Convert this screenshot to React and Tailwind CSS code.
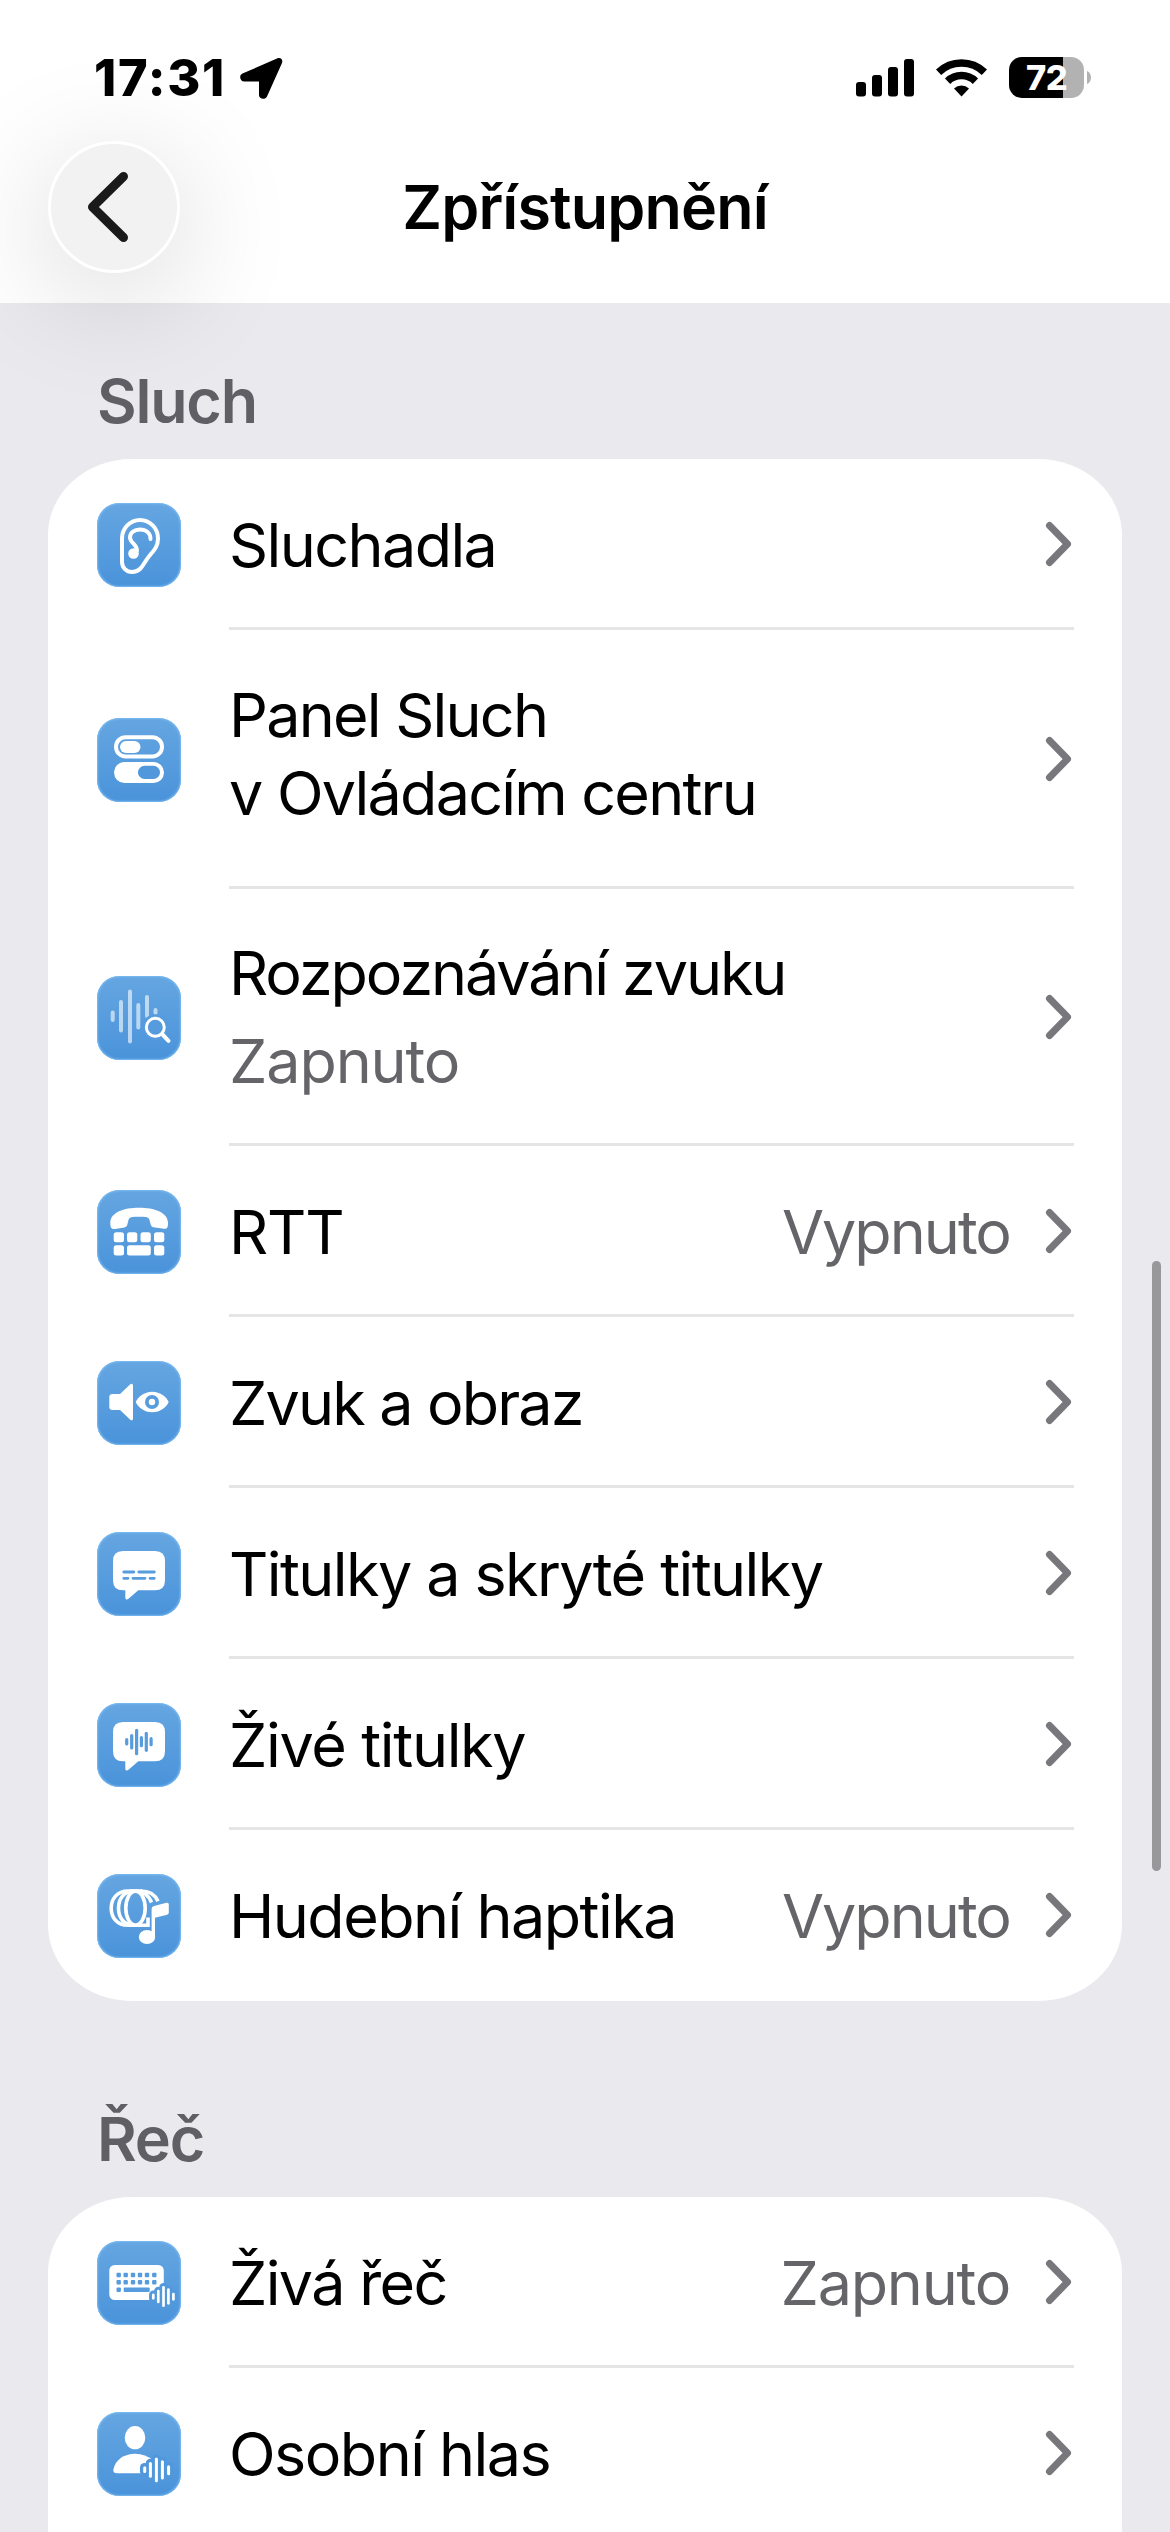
import React from 'react';

const KEY_COLUMNS = [21.7, 28.7, 36, 43, 50, 57.3];

const Bars = ({ bars, color = '#fff', width = 3 }) => (
  <g stroke={color} strokeWidth={width} strokeLinecap="round">
    {bars.map(([x, top, bottom]) => (
      <line key={x} x1={x} x2={x} y1={top} y2={bottom} />
    ))}
  </g>
);

const EarIcon = () => (
  <g fill="none" stroke="#fff" strokeWidth="4" strokeLinecap="round" strokeLinejoin="round">
    <path d="M25 35.500A18 18.500 0 0 1 61 35.500C61 43 57.500 47 53.500 51.500C48.500 57 47 62 43.500 65.500C41 68 38 69 35 69A10 10 0 0 1 25 59Z" />
    <path d="M53.500 36C53.500 30 49 26.500 43 26.500C37 26.500 33 30 33 34.500C33 40 40 41 40 47.500" />
    <circle cx="36.500" cy="50.500" r="5.300" fill="#fff" stroke="none" />
  </g>
);

const TogglesIcon = () => (
  <>
    <rect x="19" y="19.200" width="46" height="19.300" rx="9.600" fill="none" stroke="#fff" strokeWidth="4" />
    <rect x="23" y="23" width="20.500" height="12" rx="6" fill="#fff" />
    <rect x="17" y="44" width="50" height="21" rx="10.500" fill="#fff" />
    <rect x="41" y="47.700" width="22" height="13.300" rx="6.600" fill="#5097db" />
  </>
);

const SoundSearchIcon = () => (
  <>
    <g opacity="0.6">
      <Bars width={4} bars={[[15.7, 36.5, 44], [24, 26, 54.5], [33, 15.5, 65.5], [41.3, 29, 51.5], [50, 21, 40], [58.5, 34, 37]]} />
    </g>
    <circle cx="58.300" cy="51.300" r="13" fill="#559bdd" />
    <g fill="none" stroke="#fff" strokeLinecap="round">
      <circle cx="58.300" cy="51.300" r="9" strokeWidth="3" />
      <path d="M65.500 58.500L71.500 64.800" strokeWidth="4" />
    </g>
  </>
);

const PhoneIcon = () => (
  <g fill="#fff">
    <path d="M13.300 33C13.300 22 27 17.700 42 17.700S71 22 71 33C71 38 70 39 67 38.700L58 37.500C54 37 54 36 53 32C52.500 28.500 51 27.300 49 27C45 26.600 39 26.600 35 27C33 27.300 31.500 28.500 31 32C30 36 30 37 26 37.700L18 39C14.500 39.300 13.300 38 13.300 33Z" />
    <rect x="16.700" y="42.300" width="10.300" height="10" rx="2.500" />
    <rect x="30" y="42.300" width="10.300" height="10" rx="2.500" />
    <rect x="43.500" y="42.300" width="10.300" height="10" rx="2.500" />
    <rect x="57" y="42.300" width="10.300" height="10" rx="2.500" />
    <rect x="16.700" y="55.300" width="10.300" height="10.300" rx="2.500" />
    <rect x="30" y="55.300" width="23.800" height="10.300" rx="2.500" />
    <rect x="57" y="55.300" width="10.300" height="10.300" rx="2.500" />
  </g>
);

const SpeakerEyeIcon = () => (
  <>
    <path fill="#fff" d="M15.500 33H23L33 23.500C34.500 22 36 22.700 36 24.500V57.500C36 59.500 34.500 60 33 58.500L23 49H15.500Q12.300 49 12.300 46V36Q12.300 33 15.500 33Z" />
    <path fill="#fff" d="M38.700 41C41 36 47 30.700 55.200 30.700S69.500 36 71.700 41C69.500 46 63.500 51.300 55.200 51.300S41 46 38.700 41Z" />
    <circle cx="55" cy="41" r="7" fill="#579cdd" />
    <circle cx="55" cy="41" r="3.200" fill="#fff" />
  </>
);

const Bubble = () => (
  <path fill="#fff" d="M26 19H58Q68 19 68 29V48.300Q68 58.300 58 58.300H41.300L31.500 66.800C29.700 68.200 28.300 67.500 28.300 65.500V58.300H26Q16 58.300 16 48.300V29Q16 19 26 19Z" />
);

const CaptionsIcon = () => (
  <>
    <Bubble />
    <path stroke="#579cdd" strokeWidth="2.800" strokeLinecap="round" d="M26.800 40H36.800M41.800 40H57.300M26.800 46.300H31M36 46.300H48M53 46.300H57.300" />
  </>
);

const LiveCaptionsIcon = () => (
  <>
    <Bubble />
    <Bars color="#579cdd" width={3.2} bars={[[29.7, 36.5, 41], [34.7, 32.7, 45], [39.6, 27.3, 50.7], [44.4, 34.6, 42.7], [49.3, 30.3, 47.3], [54.1, 35.7, 41.7]]} />
  </>
);

const MusicHapticsIcon = () => (
  <>
    <g fill="none" stroke="#fff" strokeWidth="3.600">
      <path d="M45 17H31C20 17 14.200 25 14.200 34.300S20 51.300 31 51.300H51V43.500" />
      <path d="M37 17C27 17 21.500 25 21.500 34.300S27 51.300 37 51.300" />
      <ellipse cx="38.500" cy="34.200" rx="9.700" ry="17" />
      <path d="M38 17C47 17 52 22 54.500 28.500" />
      <path d="M44 17C52 17 58 20.500 61 27.200" />
    </g>
    <ellipse cx="50" cy="63" rx="8.200" ry="7" fill="#fff" />
    <path fill="#fff" d="M54.600 35Q54.600 32.500 57 32L69.500 28.800Q71.800 28.300 71.800 30.500V38.500Q71.800 40.300 70 40.800L58 43.800V63H54.600Z" />
  </>
);

const keyboardWave = [[56.3, 53.8, 57.3], [61.3, 50, 61], [66.5, 46.3, 64.7], [71.4, 48.7, 62.3], [76.4, 53, 58.3]];

const KeyboardIcon = () => (
  <>
    <rect x="12.300" y="24" width="54.500" height="35" rx="5.500" fill="#fff" />
    <g fill="#559bdd">
      {KEY_COLUMNS.map((x) => (
        <React.Fragment key={x}>
          <rect x={x - 2.2} y="31.800" width="4.400" height="4.400" rx="1" />
          <rect x={x - 2.2} y="39.100" width="4.400" height="4.400" rx="1" />
        </React.Fragment>
      ))}
      <rect x="19.500" y="46.500" width="4.400" height="4.400" rx="1" />
      <rect x="26.700" y="46.500" width="26" height="4.400" rx="1" />
    </g>
    <Bars bars={keyboardWave} color="#5299dc" width={8.5} />
    <Bars bars={keyboardWave} width={2.7} />
  </>
);

const personWave = [[47.7, 55.7, 59.5], [53.4, 51.5, 64.3], [59.4, 47, 68.7], [65.4, 49.8, 66], [71.6, 54.7, 61.7]];

const PersonIcon = () => (
  <>
    <ellipse cx="38" cy="25.700" rx="10.300" ry="11.600" fill="#fff" />
    <path fill="#fff" d="M20 61.300C17 61.300 16 60 16.400 57.500C18 48 27 41.700 38 41.700C45 41.700 51 44 56 48V61.300Z" />
    <Bars bars={personWave} color="#5097db" width={9.5} />
    <Bars bars={personWave} width={3} />
  </>
);

const sections = [
  {
    title: 'Sluch',
    titleClass: 'pt-[59px]',
    rows: [
      { label: 'Sluchadla', icon: EarIcon, tracking: 'tracking-[-0.026em]' },
      { label: 'Panel Sluch\nv Ovládacím centru', icon: TogglesIcon, height: 'h-[259px]', tracking: 'tracking-[-0.029em]', textPad: 'pb-2' },
      { label: 'Rozpoznávání zvuku', subtitle: 'Zapnuto', icon: SoundSearchIcon, height: 'h-[257px]', tracking: 'tracking-[-0.034em]', textPad: 'pt-[2px]' },
      { label: 'RTT', value: 'Vypnuto', icon: PhoneIcon, tracking: 'tracking-[-0.02em]' },
      { label: 'Zvuk a obraz', icon: SpeakerEyeIcon, tracking: 'tracking-[-0.03em]' },
      { label: 'Titulky a skryté titulky', icon: CaptionsIcon, tracking: 'tracking-[-0.026em]' },
      { label: 'Živé titulky', icon: LiveCaptionsIcon, tracking: 'tracking-[-0.022em]' },
      { label: 'Hudební haptika', value: 'Vypnuto', icon: MusicHapticsIcon, tracking: 'tracking-[-0.025em]' },
    ],
  },
  {
    title: 'Řeč',
    titleClass: 'pt-[99px]',
    rows: [
      { label: 'Živá řeč', value: 'Zapnuto', icon: KeyboardIcon, tracking: 'tracking-[-0.027em]' },
      { label: 'Osobní hlas', icon: PersonIcon, tracking: 'tracking-[-0.025em]' },
    ],
  },
];

const StatusBar = () => (
  <div className="h-[141px] pl-[94px] pr-[79px] pt-[57px] flex items-start justify-between">
    <div className="flex items-start">
      <span className="w-[146px] text-[50.5px] leading-[42px] font-extrabold tracking-[0.034em] whitespace-nowrap">17:31</span>
      <svg className="w-[43px] h-[42px]" viewBox="0 0 43 42">
        <path d="M37 1.600C40.500 0 43.300 2.500 42 6L27 39.500C25.500 43 19 42.500 19 38V24.500H4.500C0 24.500 -1.500 18.500 2.500 16.500Z" />
      </svg>
    </div>

    <div className="flex items-start">
      <svg className="w-[58px] h-[42px]" viewBox="0 0 58 42">
        <rect x="0" y="25" width="10" height="14.500" rx="3" />
        <rect x="16" y="18" width="10" height="21.500" rx="3" />
        <rect x="32" y="10" width="10" height="29.500" rx="3" />
        <rect x="48" y="2" width="10" height="37.500" rx="3" />
      </svg>
      <svg className="w-[51px] h-[42px] ml-[22px]" viewBox="0 0 51 42">
        <g fill="none" stroke="#000" strokeWidth="7.500">
          <path d="M2.600 15.200A33 33 0 0 1 48.400 15.200" />
          <path d="M11.600 24.200A20 20 0 0 1 39.400 24.200" />
        </g>
        <path d="M25.500 39.500L18 31.500A11 11 0 0 1 33 31.500Z" />
      </svg>
      <div className="ml-[22px] w-[75px] h-[41px] rounded-[13px] bg-[linear-gradient(to_right,#000_54px,#b2b2b2_54px)] flex items-center justify-center">
        <span className="text-white text-[34.5px] leading-[41px] font-extrabold tracking-[-0.02em]">72</span>
      </div>
      <svg className="w-[4px] h-[13px] ml-[3px] mt-[14px]" viewBox="0 0 4 13">
        <path fill="#b2b2b2" d="M0 0C5.300 2 5.300 11 0 13Z" />
      </svg>
    </div>
  </div>
);

const Header = () => (
  <header className="relative z-10 h-[303px] bg-white">
    <StatusBar />
    <div className="px-12 grid grid-cols-[132px_1fr_132px] items-center">
      <button className="size-[132px] rounded-full border-[3px] border-white bg-[#f2f2f2] shadow-[0_22px_120px_rgba(0,0,0,0.17)] flex items-center justify-center">
        <svg className="w-[42px] h-[70px] mr-[12px]" viewBox="0 0 42 70" fill="none" stroke="#1a1a1a" strokeWidth="9" strokeLinecap="round" strokeLinejoin="round">
          <path d="M36.500 4.500L5.500 35L36.500 65.500" />
        </svg>
      </button>
      <h1 className="text-center text-[61px] leading-[78px] font-semibold tracking-[-0.014em]">Zpřístupnění</h1>
    </div>
  </header>
);

const Row = ({ row, isLast }) => {
  const Icon = row.icon;
  return (
    <div className={`${row.height || 'h-[171px]'} pl-[49px] pr-12 flex items-center`}>
      <div className="size-[84px] shrink-0 rounded-[22px] bg-linear-to-b from-[#65a6e1] to-[#4a93da] shadow-[inset_0_0_2px_1px_#7cbcf3]">
        <svg className="size-[84px]" viewBox="0 0 84 84">
          <Icon />
        </svg>
      </div>
      <div className={`ml-12 flex-1 h-full flex items-center border-b-3 ${isLast ? 'border-transparent' : 'border-[#e5e5e5]'}`}>
        <div className={`flex-1 whitespace-pre ${row.textPad || 'pt-[3px]'}`}>
          <p className={`text-[61px] leading-[78px] ${row.tracking}`}>{row.label}</p>
          {row.subtitle && <p className="mt-[10px] text-[61px] leading-[78px] tracking-[-0.018em] text-[#656469]">{row.subtitle}</p>}
        </div>
        {row.value && (
          <span className={`pt-[3px] text-[61px] leading-[78px] text-[#656469] ${row.value === 'Vypnuto' ? 'tracking-[-0.032em]' : 'tracking-[-0.02em]'}`}>
            {row.value}
          </span>
        )}
        <svg className="w-[27px] h-[46px] ml-[35px] mr-[2px] mt-[2px]" viewBox="0 0 27 46" fill="none" stroke="#78777c" strokeWidth="7" strokeLinecap="round" strokeLinejoin="round">
          <path d="M4.500 4.500L22.500 23L4.500 41.500" />
        </svg>
      </div>
    </div>
  );
};

export default function App() {
  return (
    <div className="relative w-[1170px] h-[2532px] overflow-hidden bg-[#eae9ee] text-black font-['Inter',sans-serif]">
      <Header />
      <main className="px-12">
        {sections.map((section, sectionIdx) => {
          const isLastSection = sectionIdx === sections.length - 1;
          return (
            <section key={section.title}>
              <h2 className={`${section.titleClass} pl-[49px] pb-[19px] text-[61px] leading-[78px] font-semibold tracking-[-0.02em] text-[#605f65]`}>
                {section.title}
              </h2>
              {/* The last card runs on below the fold */}
              <div className={`rounded-[84px/76px] bg-white ${isLastSection ? 'pb-40' : ''}`}>
                {section.rows.map((row, idx) => (
                  <Row key={row.label} row={row} isLast={idx === section.rows.length - 1} />
                ))}
              </div>
            </section>
          );
        })}
      </main>
      {/* Scroll indicator */}
      <div className="absolute right-[9px] top-[1261px] w-[9px] h-[610px] rounded-full bg-[#98989a]" />
    </div>
  );
}
